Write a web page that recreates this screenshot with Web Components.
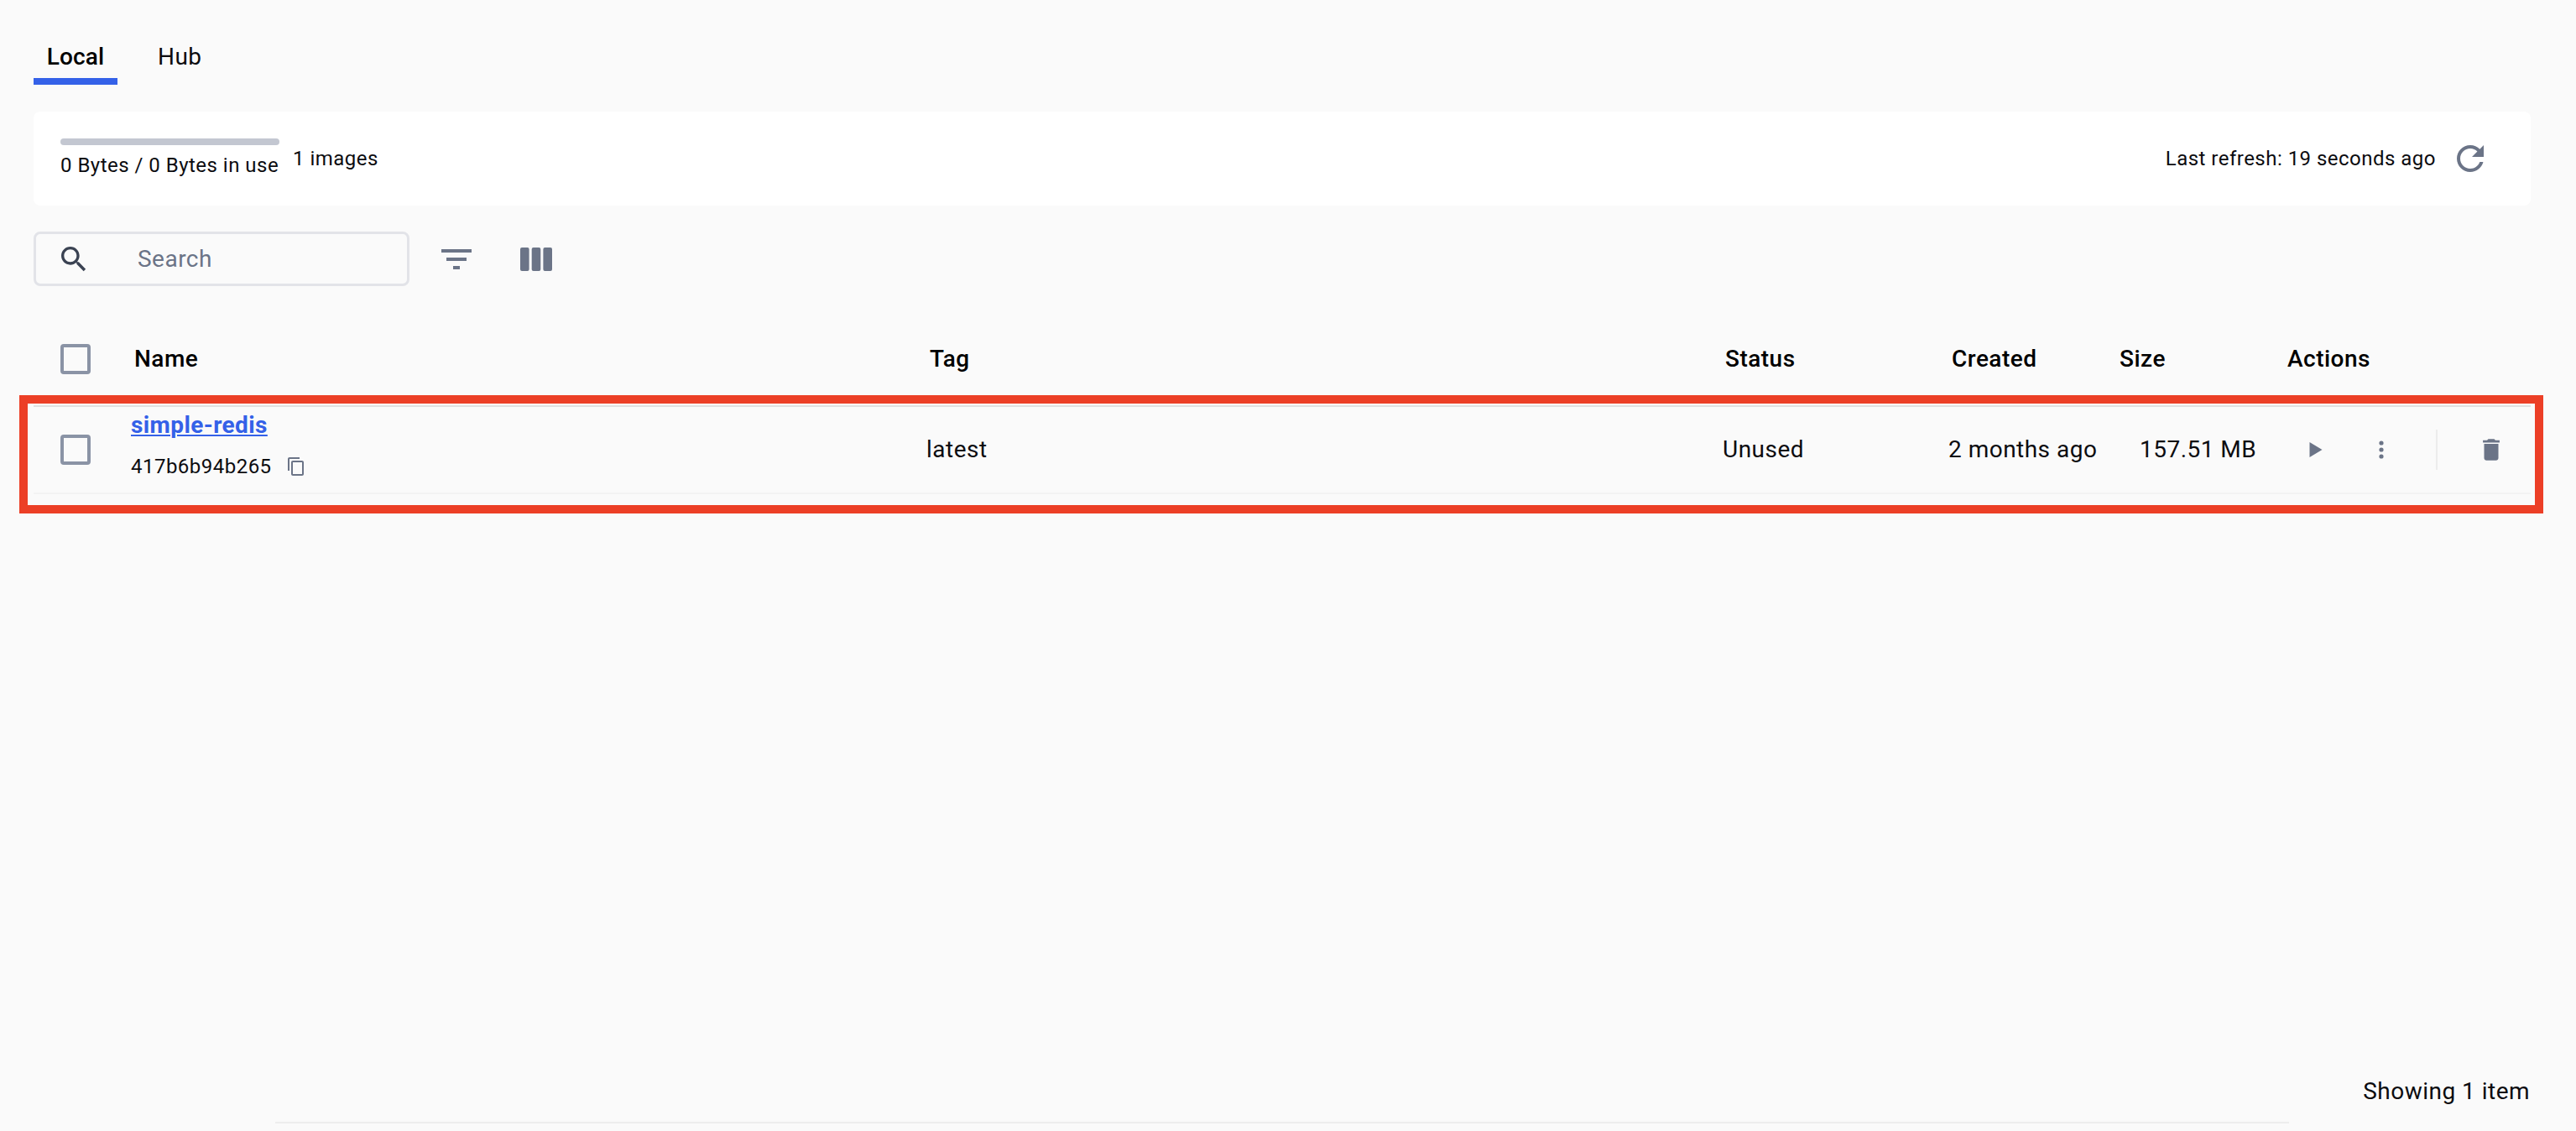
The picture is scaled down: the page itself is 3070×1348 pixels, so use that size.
<!DOCTYPE html>
<html lang="en">
<head>
<meta charset="utf-8">
<title>Images</title>
<style>
  html, body { margin: 0; height: 100%; }
  body { background: #fafafa; color: #0c0c10; font: 400 24px Roboto, "Liberation Sans", sans-serif; letter-spacing: 0.02em; }
</style>
</head>
<body>
<images-page>
  <image-tabs></image-tabs>
  <usage-card used="0 Bytes / 0 Bytes in use" images="1 images" refresh="Last refresh: 19 seconds ago"></usage-card>
  <image-toolbar></image-toolbar>
  <table-head></table-head>
  <image-row name="simple-redis" hash="417b6b94b265" tag="latest" status="Unused" created="2 months ago" size="157.51 MB"></image-row>
  <page-footer slot="footer">Showing 1 item</page-footer>
</images-page>

<script>
const PATHS = {
  search: "M15.5 14h-.79l-.28-.27C15.41 12.59 16 11.11 16 9.5 16 5.91 13.09 3 9.5 3S3 5.91 3 9.5 5.91 16 9.5 16c1.61 0 3.09-.59 4.23-1.57l.27.28v.79l5 4.99L20.49 19l-4.99-5zm-6 0C7.01 14 5 11.99 5 9.5S7.01 5 9.5 5 14 7.01 14 9.5 11.99 14 9.5 14z",
  filter: "M10 18h4v-2h-4v2zM3 6v2h18V6H3zm3 7h12v-2H6v2z",
  refresh: "M17.65 6.35C16.2 4.9 14.21 4 12 4c-4.42 0-7.99 3.58-7.99 8s3.57 8 7.99 8c3.73 0 6.84-2.55 7.73-6h-2.08c-.82 2.33-3.04 4-5.65 4-3.31 0-6-2.69-6-6s2.69-6 6-6c1.66 0 3.14.69 4.22 1.78L13 11h7V4l-2.35 2.35z",
  copy: "M16 1H4c-1.1 0-2 .9-2 2v14h2V3h12V1zm3 4H8c-1.1 0-2 .9-2 2v14c0 1.1.9 2 2 2h11c1.1 0 2-.9 2-2V7c0-1.1-.9-2-2-2zm0 16H8V7h11v14z",
  trash: "M6 19c0 1.1.9 2 2 2h8c1.1 0 2-.9 2-2V7H6v12zM19 4h-3.5l-1-1h-5l-1 1H5v2h14V4z",
};

class MIcon extends HTMLElement {
  connectedCallback() {
    const size = this.getAttribute("size") || 24;
    const color = this.getAttribute("color") || "#6b7487";
    const name = this.getAttribute("name");
    this.attachShadow({ mode: "open" }).innerHTML = `
      <style>
        :host { display: block; width: ${size}px; height: ${size}px; flex: none; }
        svg { display: block; width: 100%; height: 100%; fill: ${color}; }
      </style>
      <svg viewBox="0 0 24 24"><path d="${PATHS[name]}"/></svg>`;
  }
}

class CheckBox extends HTMLElement {
  constructor() {
    super();
    this.attachShadow({ mode: "open" }).innerHTML = `
      <style>
        :host { display: block; width: 36px; height: 36px; box-sizing: border-box; border: 4px solid #8a93a5; border-radius: 4px; }
      </style>`;
  }
}

class ImagesPage extends HTMLElement {
  constructor() {
    super();
    this.attachShadow({ mode: "open" }).innerHTML = `
      <style>
        :host { display: flex; flex-direction: column; box-sizing: border-box; height: 100vh; padding: 0 54px 0 40px; overflow: hidden; }
        .main { flex: 1; }
      </style>
      <div class="main"><slot></slot></div>
      <slot name="footer"></slot>`;
  }
}

class ImageTabs extends HTMLElement {
  constructor() {
    super();
    this.attachShadow({ mode: "open" }).innerHTML = `
      <style>
        :host { display: flex; height: 101px; font-size: 28px; line-height: 32px; }
        .tab { box-sizing: border-box; height: 101px; padding-top: 52px; text-align: center; }
        .local { width: 100px; font-weight: 500; color: #000; letter-spacing: 0.1px; border-bottom: 8px solid #3461e8; }
        .hub { margin-left: 48px; }
      </style>
      <div class="tab local">Local</div>
      <div class="tab hub">Hub</div>`;
  }
}

class UsageCard extends HTMLElement {
  connectedCallback() {
    this.attachShadow({ mode: "open" }).innerHTML = `
      <style>
        :host { display: flex; align-items: flex-start; box-sizing: border-box; height: 112px; margin-top: 32px; padding: 32px 48px 0 32px; background: #fff; border-radius: 8px; font-size: 24px; line-height: 28px; }
        .usage { width: 261px; }
        .bar { height: 8px; background: #c3c7d1; border-radius: 4px; }
        .used { margin-top: 10px; white-space: nowrap; }
        .images { margin: 10px 0 0 16px; }
        .last { margin-left: auto; margin-top: 10px; }
        m-icon { margin-left: 17px; }
      </style>
      <div class="usage">
        <div class="bar"></div>
        <div class="used">${this.getAttribute("used")}</div>
      </div>
      <div class="images">${this.getAttribute("images")}</div>
      <div class="last">${this.getAttribute("refresh")}</div>
      <m-icon name="refresh" size="48"></m-icon>`;
  }
}

class ImageToolbar extends HTMLElement {
  constructor() {
    super();
    this.attachShadow({ mode: "open" }).innerHTML = `
      <style>
        :host { display: flex; align-items: center; margin-top: 31px; }
        .search { display: flex; align-items: center; box-sizing: border-box; width: 448px; height: 65px; padding-left: 25px; border: 3px solid #e2e3e8; border-radius: 8px; font-size: 28px; color: #6b7487; }
        .search span { margin-left: 56px; }
        .filter { margin-left: 32px; }
        .columns { display: block; margin-left: 52px; width: 38px; height: 28px; fill: #6b7487; }
      </style>
      <div class="search">
        <m-icon name="search" size="40" color="#3a4252"></m-icon>
        <span>Search</span>
      </div>
      <m-icon class="filter" name="filter" size="48"></m-icon>
      <svg class="columns" viewBox="0 0 38 28">
        <rect width="10.6" height="28" rx="2"/>
        <rect x="13.7" width="10.6" height="28" rx="2"/>
        <rect x="27.4" width="10.6" height="28" rx="2"/>
      </svg>`;
  }
}

const GRID = "116px 948px 949px 269px 200px 201px 293px";

class TableHead extends HTMLElement {
  constructor() {
    super();
    this.attachShadow({ mode: "open" }).innerHTML = `
      <style>
        :host { display: grid; grid-template-columns: ${GRID}; align-items: center; height: 110px; margin-top: 32px; font-size: 28px; font-weight: 500; color: #000; }
        check-box { margin-left: 32px; }
        .c { padding: 0 0 2px 4px; }
        .tight { padding-left: 3px; }
      </style>
      <check-box></check-box>
      <div class="c">Name</div>
      <div class="c">Tag</div>
      <div class="c tight">Status</div>
      <div class="c">Created</div>
      <div class="c">Size</div>
      <div class="c tight">Actions</div>`;
  }
}

class ImageRow extends HTMLElement {
  connectedCallback() {
    const a = (k) => this.getAttribute(k);
    this.attachShadow({ mode: "open" }).innerHTML = `
      <style>
        :host { display: grid; grid-template-columns: ${GRID}; align-items: center; position: relative; box-sizing: border-box; height: 106px; border-top: 2px solid #e0e0e0; border-bottom: 2px solid #f3f3f3; font-size: 28px; }
        :host::after { content: ""; position: absolute; left: -17px; right: -15px; top: -14px; bottom: -25px; border: 10px solid #ec3f26; pointer-events: none; }
        check-box { margin-left: 32px; }
        .t { padding-bottom: 2px; }
        .main { padding-bottom: 12px; }
        .name { color: #3461e8; font-weight: 700; text-decoration: underline; text-decoration-thickness: 2px; text-underline-offset: 2px; line-height: 34px; letter-spacing: 0.4px; }
        .hash { display: flex; align-items: center; font-size: 24px; line-height: 28px; margin-top: 18px; }
        .hash m-icon { margin-left: 17px; }
        .size { padding-left: 28px; white-space: nowrap; }
        .actions { display: flex; align-items: center; padding-left: 18.5px; }
        .btn { width: 36px; height: 36px; display: flex; align-items: center; justify-content: center; }
        .dots { margin-left: 42px; }
        .sep { width: 2px; height: 48px; margin: 0 46px 0 47px; background: #ececec; }
        svg { display: block; width: 36px; height: 36px; fill: #6b7487; }
      </style>
      <check-box></check-box>
      <div class="main">
        <div class="name">${a("name")}</div>
        <div class="hash">${a("hash")}<m-icon name="copy" size="24"></m-icon></div>
      </div>
      <div class="t">${a("tag")}</div>
      <div class="t">${a("status")}</div>
      <div class="t">${a("created")}</div>
      <div class="t size">${a("size")}</div>
      <div class="actions">
        <div class="btn"><svg viewBox="0 0 36 36"><path d="M10.5 9L25.5 18 10.5 27z"/></svg></div>
        <div class="btn dots"><svg viewBox="0 0 36 36"><circle cx="18" cy="10" r="2.6"/><circle cx="18" cy="18" r="2.6"/><circle cx="18" cy="26" r="2.6"/></svg></div>
        <div class="sep"></div>
        <div class="btn"><m-icon name="trash" size="34"></m-icon></div>
      </div>`;
  }
}

class PageFooter extends HTMLElement {
  constructor() {
    super();
    this.attachShadow({ mode: "open" }).innerHTML = `
      <style>
        :host { display: block; font-size: 28px; line-height: 32px; }
        .count { text-align: right; padding-right: 1px; }
        .track { width: 2400px; height: 2px; margin: 20px auto 9px; background: #ededed; }
      </style>
      <div class="count"><slot></slot></div>
      <div class="track"></div>`;
  }
}

customElements.define("m-icon", MIcon);
customElements.define("check-box", CheckBox);
customElements.define("images-page", ImagesPage);
customElements.define("image-tabs", ImageTabs);
customElements.define("usage-card", UsageCard);
customElements.define("image-toolbar", ImageToolbar);
customElements.define("table-head", TableHead);
customElements.define("image-row", ImageRow);
customElements.define("page-footer", PageFooter);
</script>
</body>
</html>
